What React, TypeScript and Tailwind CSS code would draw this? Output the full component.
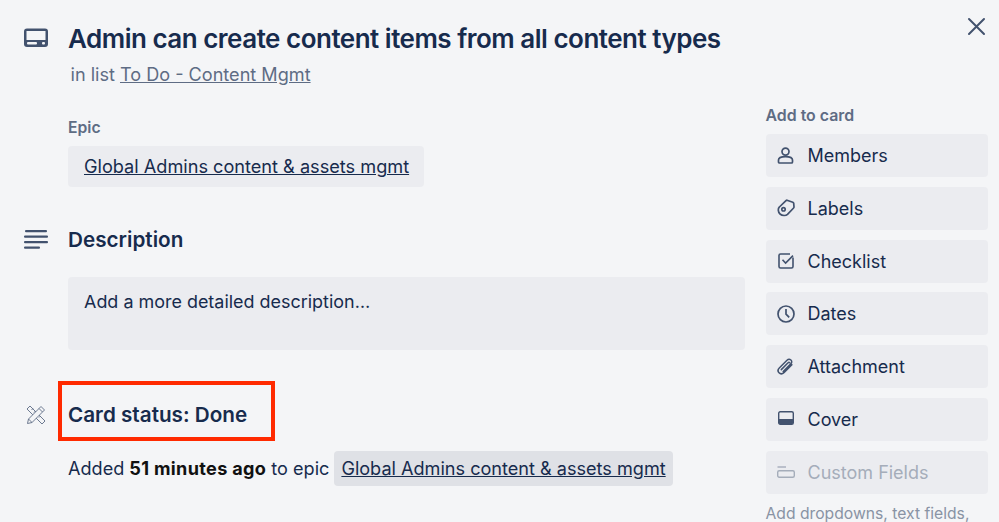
import type { ReactNode } from "react";

const inter = "font-['Inter',sans-serif]";

function CardIcon() {
    return (
        <svg width="24" height="20" viewBox="0 0 24 20" fill="none">
            <rect x="0" y="0.5" width="24" height="18.5" rx="3" fill="#42526e" />
            <rect x="2.5" y="3" width="19" height="9" fill="#f4f5f7" />
            <rect x="3" y="14" width="10" height="2.5" rx="1" fill="#f4f5f7" />
            <rect x="18" y="14" width="3" height="2.5" rx="1" fill="#f4f5f7" />
        </svg>
    );
}

function DescriptionIcon() {
    return (
        <svg width="24" height="20" viewBox="0 0 24 20" fill="#42526e">
            <rect x="1" y="0" width="22" height="2.2" rx="1" />
            <rect x="0" y="5.5" width="24" height="2.2" rx="1" />
            <rect x="0" y="11" width="24" height="2.2" rx="1" />
            <rect x="0" y="16.5" width="16" height="2.2" rx="1" />
        </svg>
    );
}

function ToolsIcon() {
    return (
        <svg width="20" height="20" viewBox="0 0 20 20" fill="none" stroke="#5e6c84" strokeWidth="0.9" strokeLinejoin="round">
            <path d="M4 1 L1 4 L16 19 L19 16 Z" />
            <path d="M5.5 5 L7 3.5 M8 7.5 L9.5 6 M10.5 10 L12 8.5 M13 12.5 L14.5 11" />
            <path d="M15 1.5 L18.5 5 L6 17.5 L1.5 18.5 L2.5 14 Z" fill="#f4f5f7" />
            <path d="M13 3.5 L16.5 7 M2.5 14 L6 17.5" />
        </svg>
    );
}

function MemberIcon() {
    return (
        <svg width="17" height="17" viewBox="0 0 17 17" fill="none" stroke="#42526e" strokeWidth="1.7">
            <circle cx="8.5" cy="4.6" r="3.5" />
            <path d="M1.5 13 C1.5 10.5 4.5 9.6 8.5 9.6 C12.5 9.6 15.5 10.5 15.5 13 V15 C15.5 15.5 15 16 14.5 16 H2.5 C2 16 1.5 15.5 1.5 15 Z" />
        </svg>
    );
}

function LabelIcon() {
    return (
        <svg width="18" height="18" viewBox="0 0 18 18" fill="none" stroke="#42526e" strokeWidth="1.7" strokeLinejoin="round">
            <path d="M10 1.2 L15.8 3.2 C16.2 3.4 16.6 3.8 16.7 4.2 L17 8 C17 8.4 16.9 8.7 16.6 9 L10.5 15.4 C9 16.8 5.4 17 3 15 C0.8 12.6 0.8 9.4 2.4 8 L9 1.6 C9.3 1.3 9.6 1.2 10 1.2 Z" />
            <circle cx="6.5" cy="10.3" r="1.7" />
        </svg>
    );
}

function ChecklistIcon() {
    return (
        <svg width="16" height="16" viewBox="0 0 16 16" fill="none" stroke="#42526e" strokeWidth="1.6">
            <path d="M15 4.5 V13.5 C15 14.3 14.3 15 13.5 15 H2.5 C1.7 15 1 14.3 1 13.5 V2.5 C1 1.7 1.7 1 2.5 1 H12" />
            <path d="M4.5 6.8 L7.6 10 L15 2.6" />
        </svg>
    );
}

function ClockIcon() {
    return (
        <svg width="18" height="18" viewBox="0 0 18 18" fill="none" stroke="#42526e" strokeWidth="1.7">
            <circle cx="9" cy="9" r="8" />
            <path d="M9 4 V9.2 L12.2 12.4" />
        </svg>
    );
}

function ClipIcon() {
    return (
        <svg width="17" height="17" viewBox="0 0 17 17" fill="none" stroke="#42526e" strokeWidth="1.5" strokeLinecap="round">
            <path d="M6.2 13.5 L13.8 5.9 C15 4.7 15 3 13.9 2 C12.8 1 11.2 1 10 2.2 L2.5 9.7 C0.7 11.5 0.8 13.6 2 14.8 C3.3 16.1 5.4 16.1 7.2 14.4 L14.9 6.8" />
            <path d="M4.3 11.6 L11.1 4.8 C11.6 4.3 12.3 4.3 12.7 4.7" />
        </svg>
    );
}

function CoverIcon() {
    return (
        <svg width="16" height="14" viewBox="0 0 16 14" fill="none" className="-mt-[2px]">
            <rect x="0.7" y="0.7" width="14.6" height="12.6" rx="1.5" stroke="#42526e" strokeWidth="1.4" />
            <path d="M1 8 H15 V12 C15 12.6 14.6 13 14 13 H2 C1.4 13 1 12.6 1 12 Z" fill="#42526e" />
        </svg>
    );
}

function FieldsIcon() {
    return (
        <svg width="18" height="12" viewBox="0 0 18 12" fill="none" stroke="#a5adba" strokeWidth="1.4">
            <path d="M0.5 1 H9" />
            <rect x="0.7" y="4.7" width="16.6" height="6.6" rx="1.5" />
        </svg>
    );
}

function SideButton({ icon, label, disabled }: { icon: ReactNode; label: string; disabled?: boolean }) {
    return (
        <div className="flex items-center h-[43px] bg-[#ebecf0] rounded-[4px]">
            <span className="flex items-center justify-center w-[42px] pr-[2px] shrink-0">{icon}</span>
            <span className={`text-[18px] ${disabled ? "text-[#a5adba]" : "text-[#172b4d]"}`}>{label}</span>
        </div>
    );
}

export default function App() {
    return (
        <div className={`relative flex h-[522px] w-[999px] overflow-hidden bg-[#f4f5f7] ${inter}`}>
            <button className="absolute top-[17px] right-[13px] w-[19px] h-[19px]">
                <svg width="19" height="19" viewBox="0 0 19 19" stroke="#42526e" strokeWidth="2" strokeLinecap="round">
                    <path d="M2 2 L17 17 M17 2 L2 17" />
                </svg>
            </button>

            <div className="w-[745px] shrink-0 pl-[24px] pt-[18px]">
                <div className="flex items-center h-[40px]">
                    <span className="w-[44px] shrink-0 flex"><CardIcon /></span>
                    <h1 className="text-[26px] mt-[1px] font-semibold tracking-[-0.5px] text-[#172b4d] whitespace-nowrap">
                        Admin can create content items from all content types
                    </h1>
                </div>
                <p className="ml-[46.5px] mt-[3px] h-[26px] leading-[26px] text-[18.1px] text-[#5e6c84]">
                    in list <span className="underline">To Do - Content Mgmt</span>
                </p>

                <div className="ml-[44px] mt-[31px]">
                    <div className="text-[15.7px] leading-[20px] font-semibold text-[#5e6c84]">Epic</div>
                    <div className="inline-flex items-center h-[41px] mt-[8px] pl-[16px] pr-[15px] pt-[1px] bg-[#ebecf0] rounded-[4px] text-[18.15px] text-[#172b4d] underline">
                        Global Admins content &amp; assets mgmt
                    </div>
                </div>

                <div className="flex items-center h-[30px] mt-[38px]">
                    <span className="w-[44px] shrink-0 flex"><DescriptionIcon /></span>
                    <h2 className="text-[20.7px] font-semibold text-[#172b4d]">Description</h2>
                </div>
                <div className="ml-[44px] mt-[22px] h-[73px] bg-[#ebecf0] rounded-[4px] px-[16px] pt-[13px] text-[17.95px] leading-[24px] text-[#172b4d]">
                    Add a more detailed description…
                </div>

                <div className="flex items-center h-[30px] mt-[50px]">
                    <span className="w-[44px] shrink-0 flex pl-[2px]"><ToolsIcon /></span>
                    <h2 className="relative text-[20.7px] font-semibold text-[#172b4d]">
                        Card status: Done
                        <span className="absolute -left-[10px] -top-[18px] w-[217px] h-[60px] border-[4px] border-[#ff2a00]" />
                    </h2>
                </div>
                <div className="ml-[44px] mt-[21px] flex items-center text-[18.1px] text-[#172b4d] whitespace-nowrap">
                    <span>Added <b className="font-bold text-[#111] tracking-[0.33px]">51 minutes ago</b> to epic</span>
                    <span className="ml-[5px] h-[35px] leading-[35px] px-[7px] bg-[#dfe1e6] rounded-[4px] underline">
                        Global Admins content &amp; assets mgmt
                    </span>
                </div>
            </div>

            <div className="ml-[20.5px] w-[222px] shrink-0 pt-[106px]">
                <div className="text-[15.9px] leading-[20px] font-semibold text-[#5e6c84]">Add to card</div>
                <div className="flex flex-col gap-[9.8px] mt-[8px]">
                    <SideButton icon={<MemberIcon />} label="Members" />
                    <SideButton icon={<LabelIcon />} label="Labels" />
                    <SideButton icon={<ChecklistIcon />} label="Checklist" />
                    <SideButton icon={<ClockIcon />} label="Dates" />
                    <SideButton icon={<ClipIcon />} label="Attachment" />
                    <SideButton icon={<CoverIcon />} label="Cover" />
                    <SideButton icon={<FieldsIcon />} label="Custom Fields" disabled />
                </div>
                <p className="mt-[10px] text-[15.7px] leading-[20px] text-[#8993a4] whitespace-nowrap">Add dropdowns, text fields,</p>
            </div>
        </div>
    );
}
